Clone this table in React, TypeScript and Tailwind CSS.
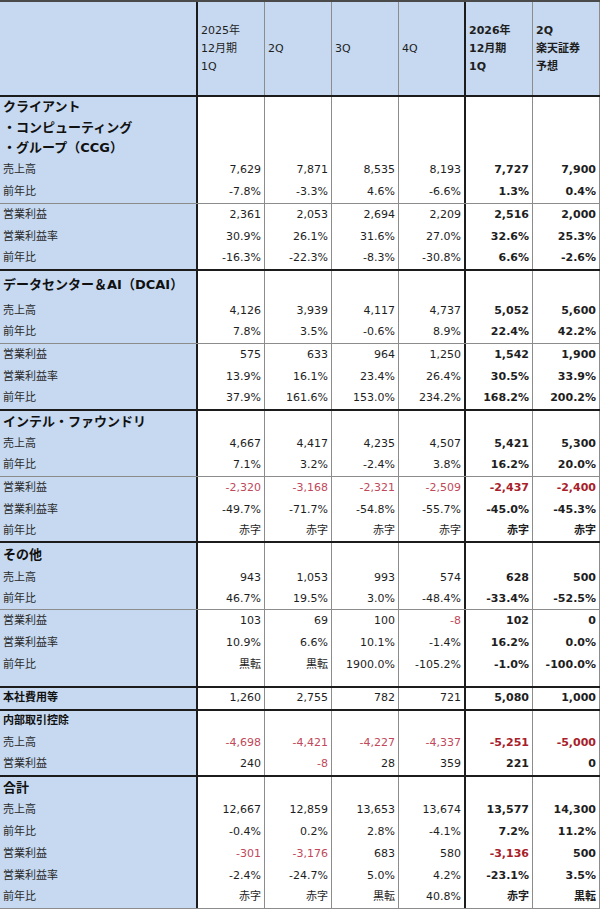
type Line = {
  label: string;
  vals: string[];
  red?: number[];
  h: string;
};

const DARK = 'border-[#1c1c1c]';
const GRAY = 'border-[#8c8c8c]';

function DataCells({ vals = [], red = [] }: { vals?: string[]; red?: number[] }) {
  return (
    <>
      {[0, 1, 2, 3, 4, 5].map((i) => {
        const bold = i >= 4;
        const isRed = red.includes(i);
        const color = isRed ? (bold ? 'text-[#a81e2a]' : 'text-[#c0485a]') : 'text-[#1e1e1e]';
        const border = i === 3 ? `border-r-2 ${DARK}` : `border-r ${GRAY}`;
        return (
          <div
            key={i}
            className={`w-[67px] shrink-0 flex items-center justify-end pr-[3px] bg-white text-[11px] ${border} ${color} ${bold ? 'font-bold' : ''}`}
          >
            {vals[i] ?? ''}
          </div>
        );
      })}
    </>
  );
}

function Row({ line }: { line: Line }) {
  return (
    <div className={`flex ${line.h}`}>
      <div className={`w-[198px] shrink-0 bg-[#c6d9f0] border-r-2 ${DARK} pl-[3px] flex items-center text-[11px] text-[#2a2a2a]`}>
        {line.label}
      </div>
      <DataCells vals={line.vals} red={line.red} />
    </div>
  );
}

function Title({ children, h, big = true }: { children: React.ReactNode; h: string; big?: boolean }) {
  return (
    <div className={`flex ${h}`}>
      <div
        className={`w-[198px] shrink-0 bg-[#c6d9f0] border-r-2 ${DARK} pl-[3px] flex flex-col justify-center font-bold text-[#111] ${big ? 'text-[13px] leading-[20.5px]' : 'text-[11px]'}`}
      >
        {children}
      </div>
      <DataCells />
    </div>
  );
}

function Group({ lines, last }: { lines: Line[]; last: 'gray' | 'dark' | 'none' }) {
  const b = last === 'dark' ? `border-b-2 ${DARK}` : last === 'gray' ? `border-b ${GRAY}` : '';
  return (
    <div className={b}>
      {lines.map((l, i) => (
        <Row key={i} line={l} />
      ))}
    </div>
  );
}

function HeaderCell({ lines, bold, i }: { lines: string[]; bold?: boolean; i: number }) {
  const border = i === 3 ? `border-r-2 ${DARK}` : `border-r ${GRAY}`;
  return (
    <div
      className={`w-[67px] shrink-0 bg-[#c6d9f0] flex flex-col justify-center pl-[3px] text-[11px] leading-[18px] text-[#1e1e1e] ${border} ${bold ? 'font-bold' : ''}`}
    >
      {lines.map((t) => (
        <div key={t}>{t}</div>
      ))}
    </div>
  );
}

export default function App() {
  return (
    <div className="w-[600px] h-[909px] overflow-hidden bg-white font-['DejaVu_Sans','Noto_Sans_CJK_JP',sans-serif] border-t-2 border-[#4a4a4a]">
      {/* header */}
      <div className={`flex h-[95px] border-b-2 ${DARK}`}>
        <div className={`w-[198px] shrink-0 bg-[#c6d9f0] border-r-2 ${DARK}`} />
        <HeaderCell i={0} lines={['2025年', '12月期', '1Q']} />
        <HeaderCell i={1} lines={['2Q']} />
        <HeaderCell i={2} lines={['3Q']} />
        <HeaderCell i={3} lines={['4Q']} />
        <HeaderCell i={4} bold lines={['2026年', '12月期', '1Q']} />
        <HeaderCell i={5} bold lines={['2Q', '楽天証券', '予想']} />
      </div>

      {/* CCG */}
      <div className={`border-b ${GRAY}`}>
        <Title h="h-[62px]">
          <div>クライアント</div>
          <div>・コンピューティング</div>
          <div>・グループ（CCG）</div>
        </Title>
        <Row line={{ label: '売上高', vals: ['7,629', '7,871', '8,535', '8,193', '7,727', '7,900'], h: 'h-[22px]' }} />
        <Row line={{ label: '前年比', vals: ['-7.8%', '-3.3%', '4.6%', '-6.6%', '1.3%', '0.4%'], h: 'h-[22px]' }} />
      </div>
      <Group
        last="dark"
        lines={[
          { label: '営業利益', vals: ['2,361', '2,053', '2,694', '2,209', '2,516', '2,000'], h: 'h-[22px]' },
          { label: '営業利益率', vals: ['30.9%', '26.1%', '31.6%', '27.0%', '32.6%', '25.3%'], h: 'h-[22px]' },
          { label: '前年比', vals: ['-16.3%', '-22.3%', '-8.3%', '-30.8%', '6.6%', '-2.6%'], h: 'h-[21px]' },
        ]}
      />

      {/* DCAI */}
      <div className={`border-b ${GRAY}`}>
        <Title h="h-[29px]">データセンター＆AI（DCAI）</Title>
        <Row line={{ label: '売上高', vals: ['4,126', '3,939', '4,117', '4,737', '5,052', '5,600'], h: 'h-[22px]' }} />
        <Row line={{ label: '前年比', vals: ['7.8%', '3.5%', '-0.6%', '8.9%', '22.4%', '42.2%'], h: 'h-[21px]' }} />
      </div>
      <Group
        last="dark"
        lines={[
          { label: '営業利益', vals: ['575', '633', '964', '1,250', '1,542', '1,900'], h: 'h-[22px]' },
          { label: '営業利益率', vals: ['13.9%', '16.1%', '23.4%', '26.4%', '30.5%', '33.9%'], h: 'h-[22px]' },
          { label: '前年比', vals: ['37.9%', '161.6%', '153.0%', '234.2%', '168.2%', '200.2%'], h: 'h-[21px]' },
        ]}
      />

      {/* Intel Foundry */}
      <div className={`border-b ${GRAY}`}>
        <Title h="h-[22px]">インテル・ファウンドリ</Title>
        <Row line={{ label: '売上高', vals: ['4,667', '4,417', '4,235', '4,507', '5,421', '5,300'], h: 'h-[22px]' }} />
        <Row line={{ label: '前年比', vals: ['7.1%', '3.2%', '-2.4%', '3.8%', '16.2%', '20.0%'], h: 'h-[21px]' }} />
      </div>
      <Group
        last="dark"
        lines={[
          { label: '営業利益', vals: ['-2,320', '-3,168', '-2,321', '-2,509', '-2,437', '-2,400'], red: [0, 1, 2, 3, 4, 5], h: 'h-[22px]' },
          { label: '営業利益率', vals: ['-49.7%', '-71.7%', '-54.8%', '-55.7%', '-45.0%', '-45.3%'], h: 'h-[22px]' },
          { label: '前年比', vals: ['赤字', '赤字', '赤字', '赤字', '赤字', '赤字'], h: 'h-[20px]' },
        ]}
      />

      {/* Other */}
      <div className={`border-b ${GRAY}`}>
        <Title h="h-[24px]">その他</Title>
        <Row line={{ label: '売上高', vals: ['943', '1,053', '993', '574', '628', '500'], h: 'h-[22px]' }} />
        <Row line={{ label: '前年比', vals: ['46.7%', '19.5%', '3.0%', '-48.4%', '-33.4%', '-52.5%'], h: 'h-[20px]' }} />
      </div>
      <Group
        last="dark"
        lines={[
          { label: '営業利益', vals: ['103', '69', '100', '-8', '102', '0'], red: [3], h: 'h-[22px]' },
          { label: '営業利益率', vals: ['10.9%', '6.6%', '10.1%', '-1.4%', '16.2%', '0.0%'], h: 'h-[22px]' },
          { label: '前年比', vals: ['黒転', '黒転', '1900.0%', '-105.2%', '-1.0%', '-100.0%'], h: 'h-[22px]' },
          { label: '', vals: [], h: 'h-[10px]' },
        ]}
      />

      {/* HQ */}
      <div className={`border-b-2 ${DARK}`}>
        <div className="flex h-[21px]">
          <div className={`w-[198px] shrink-0 bg-[#c6d9f0] border-r-2 ${DARK} pl-[3px] flex items-center text-[11px] font-bold text-[#111]`}>
            本社費用等
          </div>
          <DataCells vals={['1,260', '2,755', '782', '721', '5,080', '1,000']} />
        </div>
      </div>

      {/* Intersegment */}
      <div className={`border-b-2 ${DARK}`}>
        <Title h="h-[21px]" big={false}>
          内部取引控除
        </Title>
        <Row line={{ label: '売上高', vals: ['-4,698', '-4,421', '-4,227', '-4,337', '-5,251', '-5,000'], red: [0, 1, 2, 3, 4, 5], h: 'h-[22px]' }} />
        <Row line={{ label: '営業利益', vals: ['240', '-8', '28', '359', '221', '0'], red: [1], h: 'h-[21px]' }} />
      </div>

      {/* Total */}
      <div className={`border-b ${GRAY}`}>
        <Title h="h-[22px]">合計</Title>
        <Row line={{ label: '売上高', vals: ['12,667', '12,859', '13,653', '13,674', '13,577', '14,300'], h: 'h-[22px]' }} />
        <Row line={{ label: '前年比', vals: ['-0.4%', '0.2%', '2.8%', '-4.1%', '7.2%', '11.2%'], h: 'h-[22px]' }} />
        <Row line={{ label: '営業利益', vals: ['-301', '-3,176', '683', '580', '-3,136', '500'], red: [0, 1, 4], h: 'h-[22px]' }} />
        <Row line={{ label: '営業利益率', vals: ['-2.4%', '-24.7%', '5.0%', '4.2%', '-23.1%', '3.5%'], h: 'h-[22px]' }} />
        <Row line={{ label: '前年比', vals: ['赤字', '赤字', '黒転', '40.8%', '赤字', '黒転'], h: 'h-[21px]' }} />
      </div>
    </div>
  );
}
